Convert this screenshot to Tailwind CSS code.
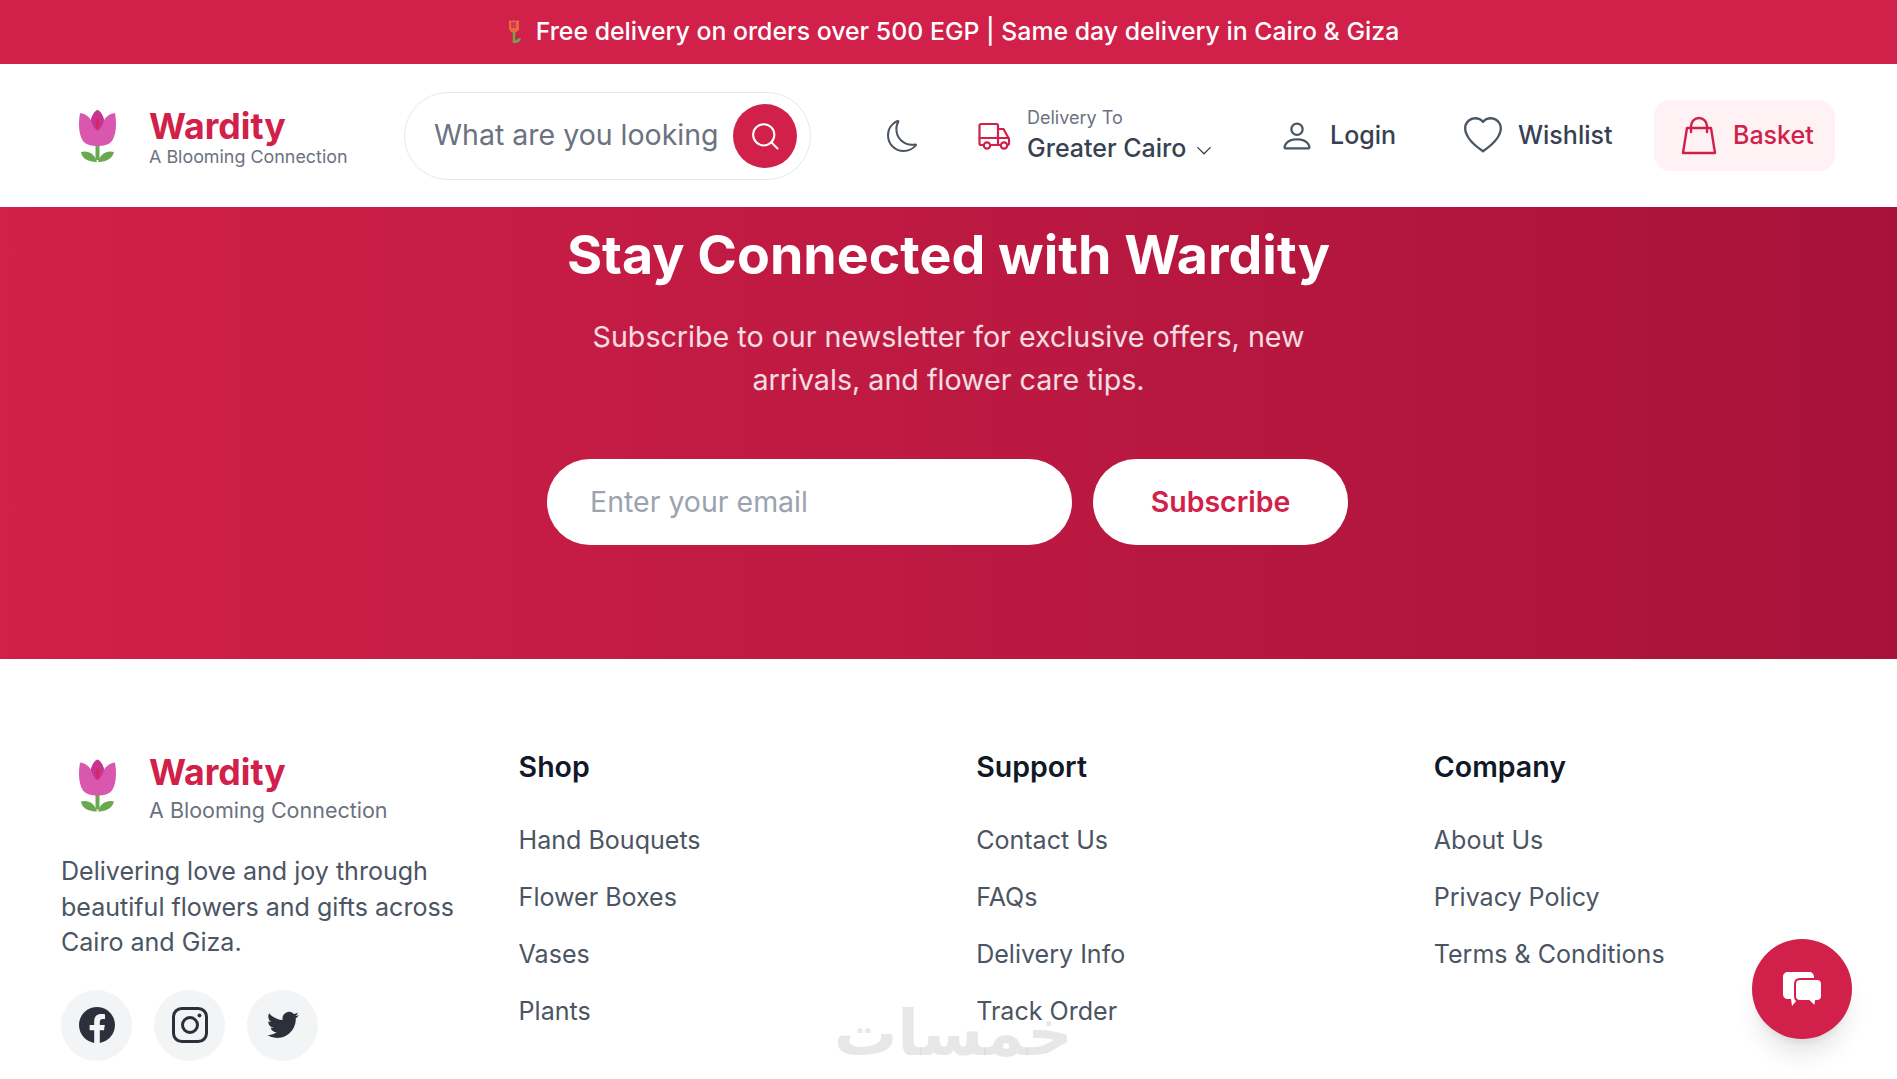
<!DOCTYPE html>
<html lang="en"><head><meta charset="utf-8"><title>Wardity</title>
<script src="https://cdn.jsdelivr.net/npm/@tailwindcss/browser@4"></script></head>
<body class="h-screen overflow-hidden bg-white font-['Inter',sans-serif] text-[#374151]">
<div class="flex h-[64px] items-center justify-center bg-[#d12049] pl-[5px] text-[24.850px] font-medium text-white">
  <svg class="mr-[9px] h-[26px] w-[24px]" viewBox="0 0 22 26"><path d="M5 1l3 1 2-1 2 1 3-1v10l-4 3-4-1-2-3z" fill="#e8683f"/><path d="M7 3h5v6H7z" fill="#d33a55"/><path d="M10 13v11" stroke="#6aa84f" stroke-width="2.5"/><path d="M10 24c2-4 5-5 7-5-1 4-3 5-7 5z" fill="#6aa84f"/></svg>
  <span>Free delivery on orders over 500 EGP | Same day delivery in Cairo &amp; Giza</span>
</div>
<header class="flex h-[143px] items-center bg-white pl-[79px]">
  <svg class="mt-[2px] h-[54px] w-[37px] shrink-0" viewBox="0 0 37 54"><path d="M18.5 34v16" stroke="#6aa84f" stroke-width="4"/><path d="M18 52C12 52 3 50 2 42c7-2 14 2 16 10zM19 52c6 0 14-2 16-10-7-2-14 2-16 10z" fill="#6aa84f"/><path d="M1 3c6 1 9 4 11 7 1-5 4-9 6.500-10C21 1 24 5 25 10c2-3 5-6 11-7 2 12 1 22-3 28-3 4-9 5-14.500 5S7 35 4 31C0 25-1 15 1 3z" fill="#d957ae"/><path d="M12 10c1-5 4-9 6.500-10C21 1 24 5 25 10c-1 5-4 9-6.500 11C16 19 13 15 12 10z" fill="#c93390"/><path d="M18.500 8c2 3 2 8 0 12-2-4-2-9 0-12z" fill="#d8255f"/></svg>
  <div class="ml-[33px] w-[221px] shrink-0 pt-[4px]">
    <div class="text-[35.700px] font-bold leading-[40px] text-[#d12049]">Wardity</div>
    <div class="-mt-[1px] text-[17.900px] leading-[24px] text-[#6b7280]">A Blooming Connection</div>
  </div>
  <div class="ml-[34px] flex h-[88px] w-[407px] shrink-0 items-center overflow-hidden rounded-full border border-[#e5e7eb] pl-[29px] pr-[13px]">
    <span class="w-[299px] overflow-hidden whitespace-nowrap text-[28.500px] text-[#6b7280]">What are you looking</span>
    <span class="ml-auto flex h-[64px] w-[64px] shrink-0 items-center justify-center rounded-full bg-[#d12049]"><svg class="h-[30px] w-[30px]" viewBox="0 0 24 24" fill="none" stroke="#fff" stroke-width="1.600" stroke-linecap="round"><circle cx="11" cy="11" r="8.500"/><path d="M17 17l5 5"/></svg></span>
  </div>
  <svg class="ml-[76px] h-[32px] w-[32px] shrink-0" viewBox="0 0 16 16" fill="#4b5563"><path d="M6 .278a.768.768 0 0 1 .08.858 7.208 7.208 0 0 0-.878 3.46c0 4.021 3.278 7.277 7.318 7.277.527 0 1.040-.055 1.533-.160a.787.787 0 0 1 .810.316.733.733 0 0 1-.031.893A8.349 8.349 0 0 1 8.344 16C3.734 16 0 12.286 0 7.710 0 4.266 2.114 1.312 5.124.060A.752.752 0 0 1 6 .278zM4.858 1.311A7.269 7.269 0 0 0 1.025 7.710c0 4.020 3.279 7.276 7.319 7.276a7.316 7.316 0 0 0 5.205-2.162c-.337.042-.680.063-1.029.063-4.610 0-8.343-3.714-8.343-8.290 0-1.167.242-2.278.681-3.286z"/></svg>
  <svg class="ml-[59px] h-[34px] w-[34px] shrink-0" viewBox="0 0 34 34" fill="none" stroke="#d12049" stroke-width="2.200" stroke-linejoin="round" stroke-linecap="round"><path d="M5 26H3a1.500 1.500 0 0 1-1.500-1.500V6.500A1.500 1.500 0 0 1 3 5h15.500A1.500 1.500 0 0 1 20 6.500V26M13 26h7"/><path d="M1.500 19H31M20 10h5.500l5.500 10v4.500a1.500 1.500 0 0 1-1.500 1.500H29M20 26h3"/><circle cx="9" cy="26.500" r="3.200"/><circle cx="26" cy="26.500" r="3.200"/></svg>
  <div class="ml-[15px] w-[232px] shrink-0">
    <div class="text-[18px] leading-[24px] text-[#6b7280]">Delivery To</div>
    <div class="flex items-center text-[25px] font-medium leading-[36px] text-[#374151]">Greater Cairo<svg class="ml-[8px] mt-[4px] h-[20px] w-[20px]" viewBox="0 0 24 24" fill="none" stroke="#374151" stroke-width="1.500"><path d="M4 8.500l8 8 8-8"/></svg></div>
  </div>
  <svg class="ml-[20px] h-[36px] w-[36px] shrink-0" viewBox="0 0 16 16" fill="#4b5563"><path d="M8 8a3 3 0 1 0 0-6 3 3 0 0 0 0 6zm2-3a2 2 0 1 1-4 0 2 2 0 0 1 4 0zm4 8c0 1-1 1-1 1H3s-1 0-1-1 1-4 6-4 6 3 6 4zm-1-.004c-.001-.246-.154-.986-.832-1.664C11.516 10.680 10.289 10 8 10c-2.290 0-3.516.680-4.168 1.332-.678.678-.830 1.418-.832 1.664h10z"/></svg>
  <span class="ml-[15px] w-[134px] shrink-0 text-[25px] font-medium text-[#374151]">Login</span>
  <svg class="h-[38px] w-[38px] shrink-0" viewBox="0 0 16 16" fill="#4b5563"><path d="m8 2.748-.717-.737C5.600.281 2.514.878 1.400 3.053c-.523 1.023-.641 2.500.314 4.385.920 1.815 2.834 3.989 6.286 6.357 3.452-2.368 5.365-4.542 6.286-6.357.955-1.886.838-3.362.314-4.385C13.486.878 10.400.280 8.717 2.010L8 2.748zM8 15C-7.333 4.868 3.279-3.040 7.824 1.143c.060.055.119.112.176.171a3.120 3.120 0 0 1 .176-.170C12.720-3.042 23.333 4.867 8 15z"/></svg>
  <span class="ml-[16px] w-[136px] shrink-0 text-[25px] font-medium text-[#374151]">Wishlist</span>
  <div class="flex h-[71px] w-[181px] shrink-0 items-center rounded-[16px] bg-[#fef2f4] pl-[26px]">
    <svg class="h-[40px] w-[38px] shrink-0" viewBox="0 0 38 40" fill="none" stroke="#d12049" stroke-width="2.400" stroke-linejoin="round" stroke-linecap="round"><path d="M7 12h24l4 25H3z"/><path d="M11 16V10a8 8 0 0 1 16 0v6"/></svg>
    <span class="ml-[15px] text-[25px] font-medium text-[#d12049]">Basket</span>
  </div>
</header>
<section class="flex h-[452px] flex-col items-center bg-linear-to-r from-[#d12049] to-[#a8123a] pt-[13px] text-center text-white">
  <h1 class="text-[53.700px] font-bold leading-[70px]">Stay Connected with Wardity</h1>
  <p class="mt-[25px] w-[768px] text-[28.650px] leading-[43px] text-white/85">Subscribe to our newsletter for exclusive offers, new arrivals, and flower care tips.</p>
  <div class="-ml-[2px] mt-[58px] flex gap-[21px]">
    <div class="flex h-[86px] w-[525px] items-center rounded-full bg-white pl-[43px] text-[28.500px] text-[#9ca3af]">Enter your email</div>
    <div class="flex h-[86px] w-[255px] items-center justify-center rounded-full bg-white text-[28.500px] font-semibold text-[#d12049]">Subscribe</div>
  </div>
</section>
<footer class="grid grid-cols-[457.600px_457.600px_457.600px_1fr] pl-[61px] pt-[87px]">
  <div>
    <div class="flex items-center">
      <svg class="ml-[18px] h-[55px] w-[37px] shrink-0" viewBox="0 0 37 54"><path d="M18.5 34v16" stroke="#6aa84f" stroke-width="4"/><path d="M18 52C12 52 3 50 2 42c7-2 14 2 16 10zM19 52c6 0 14-2 16-10-7-2-14 2-16 10z" fill="#6aa84f"/><path d="M1 3c6 1 9 4 11 7 1-5 4-9 6.500-10C21 1 24 5 25 10c2-3 5-6 11-7 2 12 1 22-3 28-3 4-9 5-14.500 5S7 35 4 31C0 25-1 15 1 3z" fill="#d957ae"/><path d="M12 10c1-5 4-9 6.500-10C21 1 24 5 25 10c-1 5-4 9-6.500 11C16 19 13 15 12 10z" fill="#c93390"/><path d="M18.500 8c2 3 2 8 0 12-2-4-2-9 0-12z" fill="#d8255f"/></svg>
      <div class="ml-[33px] pt-[6px]">
        <div class="text-[35.700px] font-bold leading-[40px] text-[#d12049]">Wardity</div>
        <div class="mt-[2px] text-[21.500px] leading-[32px] text-[#6b7280]">A Blooming Connection</div>
      </div>
    </div>
    <p class="mt-[28px] w-[410px] text-[25.060px] leading-[35.500px] text-[#4b5563]">Delivering love and joy through beautiful flowers and gifts across Cairo and Giza.</p>
    <div class="mt-[29px] flex gap-[22px]">
      <span class="flex h-[71px] w-[71px] items-center justify-center rounded-full bg-[#f3f4f6]"><svg class="h-[36px] w-[36px]" viewBox="0 0 24 24" fill="#2b303b"><path d="M24 12.070C24 5.400 18.630 0 12 0S0 5.400 0 12.070c0 6.030 4.390 11.020 10.130 11.930v-8.440H7.080v-3.490h3.050V9.410c0-3.020 1.790-4.690 4.530-4.690 1.310 0 2.680.24 2.680.24v2.970h-1.510c-1.490 0-1.960.93-1.960 1.880v2.260h3.330l-.53 3.490h-2.800V24C19.610 23.090 24 18.100 24 12.070z"/></svg></span>
      <span class="flex h-[71px] w-[71px] items-center justify-center rounded-full bg-[#f3f4f6]"><svg class="h-[36px] w-[36px]" viewBox="0 0 24 24" fill="none" stroke="#2b303b" stroke-width="2"><rect x="1" y="1" width="22" height="22" rx="5.500"/><circle cx="12" cy="12" r="5"/><circle cx="18.300" cy="5.700" r="1.300" fill="#2b303b" stroke="none"/></svg></span>
      <span class="flex h-[71px] w-[71px] items-center justify-center rounded-full bg-[#f3f4f6]"><svg class="h-[32px] w-[32px]" viewBox="0 0 24 24" fill="#2b303b"><path d="M23.950 4.570a10 10 0 0 1-2.820.77 4.960 4.960 0 0 0 2.160-2.720c-.95.550-2 .96-3.130 1.190a4.920 4.920 0 0 0-8.380 4.480C7.690 8.100 4.070 6.130 1.640 3.160a4.820 4.820 0 0 0-.660 2.470c0 1.710.87 3.210 2.190 4.100a4.900 4.900 0 0 1-2.230-.62v.06a4.920 4.920 0 0 0 3.950 4.830c-.72.190-1.490.22-2.220.08a4.940 4.940 0 0 0 4.600 3.420A9.870 9.870 0 0 1 0 19.540a14 14 0 0 0 7.560 2.210c9.050 0 14-7.500 14-13.980 0-.21 0-.42-.02-.63a9.940 9.940 0 0 0 2.460-2.550z"/></svg></span>
    </div>
  </div>
  <div class="pt-[1px]">
    <h3 class="text-[28.500px] font-semibold leading-[40px] text-[#111827]">Shop</h3>
    <ul class="mt-[34px] flex flex-col gap-[19px] text-[25.060px] leading-[38px] text-[#4b5563]"><li>Hand Bouquets</li><li>Flower Boxes</li><li>Vases</li><li>Plants</li></ul>
  </div>
  <div class="pt-[1px]">
    <h3 class="text-[28.500px] font-semibold leading-[40px] text-[#111827]">Support</h3>
    <ul class="mt-[34px] flex flex-col gap-[19px] text-[25.060px] leading-[38px] text-[#4b5563]"><li>Contact Us</li><li>FAQs</li><li>Delivery Info</li><li>Track Order</li></ul>
  </div>
  <div class="pt-[1px]">
    <h3 class="text-[28.500px] font-semibold leading-[40px] text-[#111827]">Company</h3>
    <ul class="mt-[34px] flex flex-col gap-[19px] text-[25.060px] leading-[38px] text-[#4b5563]"><li>About Us</li><li>Privacy Policy</li><li>Terms &amp; Conditions</li></ul>
  </div>
</footer>
<div dir="rtl" class="pointer-events-none fixed left-[834px] top-[996px] font-['DejaVu_Sans',sans-serif] text-[63px] font-bold leading-[76px] text-[#cfcfcf]/50">خمسات</div>
<div class="fixed left-[1752px] top-[939px] flex h-[100px] w-[100px] items-center justify-center rounded-full bg-[#d12049] shadow-xl">
  <svg class="-mt-[1px] ml-[1px] h-[36px] w-[40px]" viewBox="0 0 40 36"><path d="M5 1h21c3 0 5 2 5 5v22H15l-6 7-1-7H5c-3 0-5-2-5-5V6c0-3 2-5 5-5z" fill="#fff"/><path d="M17 8h17c3 0 5 2 5 5v12c0 3-2 5-5 5h-1l-1 6-6-6h-9c-3 0-5-2-5-5V13c0-3 2-5 5-5z" fill="#fff" stroke="#d12049" stroke-width="2"/></svg>
</div>
</body></html>
